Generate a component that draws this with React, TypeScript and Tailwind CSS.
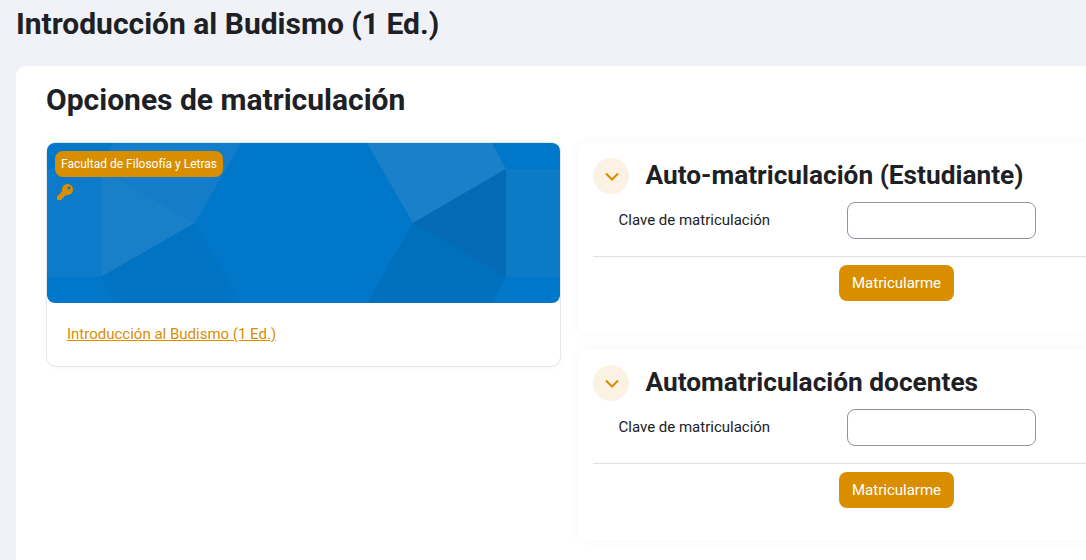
import { FaKey } from "react-icons/fa";

const FONT = "[font-family:Roboto,sans-serif]";

function Banner() {
  return (
    <div className="relative h-[160px] w-[513px] overflow-hidden rounded-t-[8px] rounded-b-[8px] bg-[#0077c9]">
      <svg className="absolute inset-0" width="513" height="160" viewBox="0 0 513 160">
        <polygon points="0,26 54,26 54,134 0,134" fill="#0d7bc9" />
        <polygon points="66,0 194,0 148,80 54,26" fill="#147dc9" />
        <polygon points="54,26 148,80 54,134" fill="#187fc9" />
        <polygon points="54,134 148,80 194,160 68,160" fill="#0073c3" />
        <polygon points="320,0 445,0 459,26 366,80" fill="#1980c9" />
        <polygon points="459,26 459,134 366,80" fill="#046ab5" />
        <polygon points="366,80 459,134 445,160 320,160" fill="#0070bc" />
        <polygon points="459,26 513,26 513,134 459,134" fill="#0d7ac8" />
      </svg>
      <div className="relative pl-[8px] pt-[8px]">
        <span className="inline-block h-[26px] rounded-[8px] bg-[#d98e00] px-[6px] text-[12px] leading-[26px] font-normal text-white">
          Facultad de Filosofía y Letras
        </span>
        <FaKey className="mt-[7px] ml-[2px] text-[16px] text-[#d98e00]" />
      </div>
    </div>
  );
}

function Enrol({ title }: { title: string }) {
  return (
    <section className="h-[191px] w-[560px] shrink-0 rounded-[10px] bg-white pt-[16px] pl-[16px] shadow-[0_0_12px_rgba(0,0,0,0.04)]">
      <div className="flex h-[36px] items-center">
        <span className="flex h-[36px] w-[36px] items-center justify-center rounded-full bg-[#fbf2e3]">
          <svg className="ml-[2px]" width="14" height="9" viewBox="0 0 14 9" fill="none" stroke="#d98e00" strokeWidth="2">
            <path d="M1 1.5 L7 7.5 L13 1.5" />
          </svg>
        </span>
        <h3 className="mb-[2px] ml-[16.5px] text-[26.25px] leading-[34px] font-bold text-[#1d2125]">{title}</h3>
      </div>
      <div className="mt-[8px] flex h-[37px] items-center">
        <label className="ml-[25.5px] w-[228.5px] text-[15px] text-[#1d2125]">Clave de matriculación</label>
        <input type="text" className="h-[37px] w-[189px] rounded-[8px] border border-[#8f959e] bg-white" />
      </div>
      <div className="mt-[17px] border-t border-[#dee2e6] pt-[8px]">
        <button className="ml-[246px] h-[36px] w-[115px] rounded-[8px] bg-[#d98e00] text-[15px] font-normal text-white">
          Matricularme
        </button>
      </div>
    </section>
  );
}

export default function App() {
  return (
    <div className={`h-[560px] w-[1086px] overflow-hidden bg-[#f0f2f7] ${FONT}`}>
      <h1 className="h-[66px] pl-[16px] pt-[6px] text-[30px] leading-[36px] font-bold text-[#1d2125]">
        Introducción al Budismo (1 Ed.)
      </h1>
      <main className="ml-[16px] h-[520px] w-[1100px] rounded-[10px] bg-white pl-[30px]">
        <h2 className="pt-[15px] text-[30px] leading-[38px] font-bold text-[#1d2125]">Opciones de matriculación</h2>
        <div className="mt-[23px] flex items-start">
          <article className="w-[515px] shrink-0 rounded-[10px] border border-[#e4e6e9] bg-white shadow-[0_0_10px_rgba(0,0,0,0.03)]">
            <Banner />
            <div className="h-[63px] pl-[20px] pt-[21px] text-[15px] leading-[21px]">
              <a href="#" className="text-[#d98e00] underline">Introducción al Budismo (1 Ed.)</a>
            </div>
          </article>
          <div className="ml-[16px] flex flex-col gap-[16px]">
            <Enrol title="Auto-matriculación (Estudiante)" />
            <Enrol title="Automatriculación docentes" />
          </div>
        </div>
      </main>
    </div>
  );
}
